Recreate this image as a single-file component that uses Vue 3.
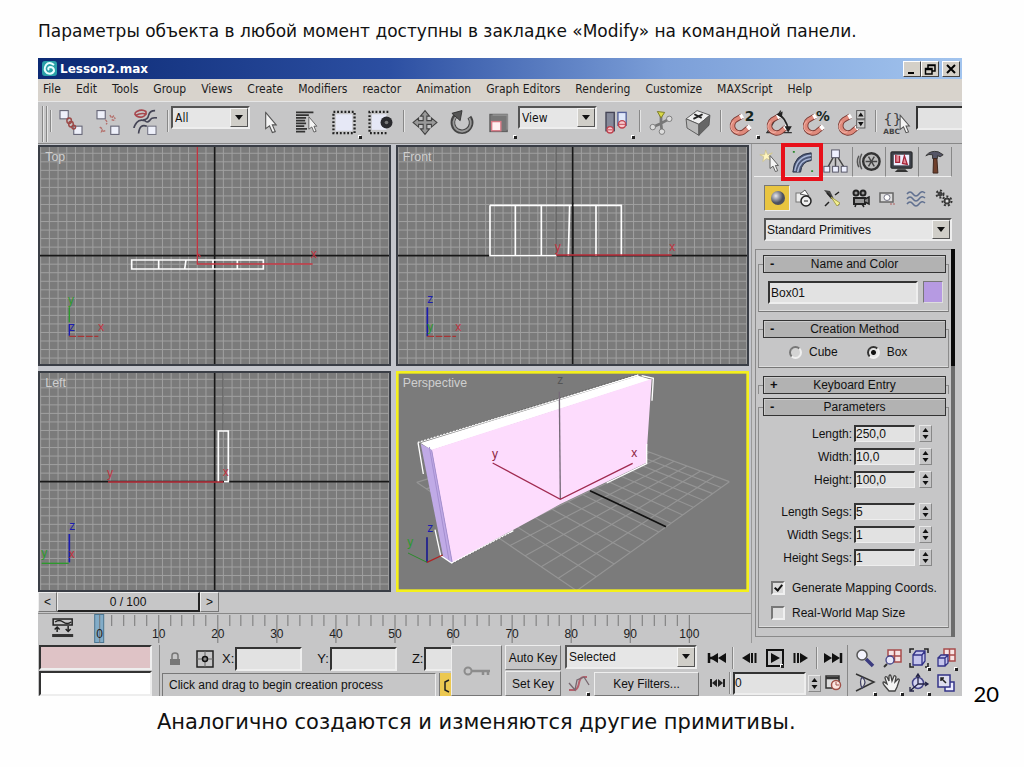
<script setup>
import { ref } from 'vue'

const menus = ['File', 'Edit', 'Tools', 'Group', 'Views', 'Create', 'Modifiers', 'reactor', 'Animation', 'Graph Editors', 'Rendering', 'Customize', 'MAXScript', 'Help']

const name = ref('Box01')
const method = ref('box')
const mapping = ref(true)
const realWorld = ref(false)
const frame = ref('0')
const sizes = ref([
  { id: 'length', label: 'Length:', value: '250,0' },
  { id: 'width', label: 'Width:', value: '10,0' },
  { id: 'height', label: 'Height:', value: '100,0' },
])
const segments = ref([
  { id: 'lsegs', label: 'Length Segs:', value: '5' },
  { id: 'wsegs', label: 'Width Segs:', value: '1' },
  { id: 'hsegs', label: 'Height Segs:', value: '1' },
])
const groups = [sizes, segments]

// orthographic grids, drawn outwards from the origin axes
const gridPath = (cx, cy) => {
  let d = ''
  for (let i = -21; i <= 21; i++) d += `M${(cx + i * 26.1).toFixed(1)} 0V700`
  for (let i = -14; i <= 14; i++) d += `M0 ${(cy + i * 25.6).toFixed(1)}H1100`
  return d
}

// perspective floor: unit square projected onto a quadrilateral
const floorPath = (() => {
  const [p0, p1, p2, p3] = [[560, 675], [1018, 348], [590, 190], [80, 350]]
  const dx1 = p1[0] - p2[0], dx2 = p3[0] - p2[0], dx3 = p0[0] - p1[0] + p2[0] - p3[0]
  const dy1 = p1[1] - p2[1], dy2 = p3[1] - p2[1], dy3 = p0[1] - p1[1] + p2[1] - p3[1]
  const det = dx1 * dy2 - dx2 * dy1
  const g = (dx3 * dy2 - dx2 * dy3) / det
  const h = (dx1 * dy3 - dx3 * dy1) / det
  const a = p1[0] - p0[0] + g * p1[0], b = p3[0] - p0[0] + h * p3[0]
  const d = p1[1] - p0[1] + g * p1[1], e = p3[1] - p0[1] + h * p3[1]
  const at = (u, v) => {
    const w = g * u + h * v + 1
    return `${((a * u + b * v + p0[0]) / w).toFixed(1)} ${((d * u + e * v + p0[1]) / w).toFixed(1)}`
  }
  let out = ''
  for (let i = 0; i <= 12; i++) {
    const t = i / 12
    out += `M${at(t, 0)}L${at(t, 1)}M${at(0, t)}L${at(1, t)}`
  }
  return out
})()

const ticks = Array.from({ length: 51 }, (_, i) => ({ frame: i * 2, x: Math.round(61 + i * 11.78) + 0.5 }))
</script>

<template>
  <div class="slide">
    <p class="lead">Параметры объекта в любой момент доступны в закладке «Modify» на командной панели.</p>

    <svg class="defs" width="0" height="0" aria-hidden="true">
      <symbol id="magnet" viewBox="0 0 36 36">
        <g fill="none" stroke-linecap="butt">
          <path d="M18 11 L11 15 A7 7 0 0 0 20 28 L26 23" stroke="#7a3a34" stroke-width="6" />
          <path d="M18 11 L11 15 A7 7 0 0 0 20 28 L26 23" stroke="#e08a7c" stroke-width="4" />
          <path d="M19 10.500 L16 12.200 M27 22.200 L24 24.700" stroke="#fff" stroke-width="5" />
          <path d="M9 17 A6 6 0 0 0 15 28" stroke="#f4b8ac" stroke-width="1" />
        </g>
      </symbol>
      <symbol id="pointer" viewBox="0 0 14 24">
        <path d="M2 1 V18 L6 15 L9 22 L12 21 L9 14 H13 Z" fill="#f4f4f4" stroke="#555" stroke-width="1.2" />
      </symbol>
    </svg>

    <main class="window">
      <header class="title">
        <svg width="17" height="17" viewBox="0 0 17 17" aria-hidden="true">
          <rect x="1" y="1" width="15" height="15" rx="3" fill="#2aa0a8" />
          <path d="M13 5 Q8 1 5 5 Q2 10 6 13 Q11 15 13 11 Q13 7 9 7 Q6 8 8 10" fill="none" stroke="#e8ffff" stroke-width="2" />
        </svg>
        <h1>Lesson2.max</h1>
        <div class="caption-buttons">
          <button aria-label="Minimize"><svg width="12" height="12"><path d="M2 10H8" stroke="#000" stroke-width="2" /></svg></button>
          <button aria-label="Restore"><svg width="12" height="12"><path d="M4 5V2H11V8H8M4 2.5H11M1.5 5.500H8V11H1.500Z M1 6.500H8" fill="none" stroke="#000" stroke-width="1.500" /></svg></button>
          <button class="close" aria-label="Close"><svg width="12" height="12"><path d="M2 2L10 10M10 2L2 10" stroke="#000" stroke-width="2" /></svg></button>
        </div>
      </header>

      <nav class="menu">
        <a v-for="m in menus" :key="m" href="#">{{ m }}</a>
      </nav>

      <div class="toolbar">
        <i class="sep grip"></i><i class="sep grip"></i><i class="sep"></i>
        <button class="tool" aria-label="Select and link">
          <svg viewBox="0 0 36 36"><g fill="#eef0fa" stroke="#667" stroke-width="1.200"><rect x="6" y="5" width="9" height="9" /><rect x="21" y="22" width="9" height="9" /></g><g fill="none" stroke="#9c4a48" stroke-width="1.600"><ellipse cx="16" cy="16" rx="2.500" ry="3" /><ellipse cx="18" cy="20" rx="2.500" ry="3" /><ellipse cx="21" cy="23" rx="2" ry="2" /></g></svg>
        </button>
        <button class="tool" aria-label="Unlink selection">
          <svg viewBox="0 0 36 36"><g fill="#eef0fa" stroke="#667" stroke-width="1.200"><rect x="6" y="5" width="9" height="9" /><rect x="21" y="22" width="9" height="9" /></g><path d="M15 15Q18 17 16 20M20 10l2 3 2-2 2 3M9 23l3 2-1 3 4-1M22 15l4 1" fill="none" stroke="#b4706c" stroke-width="1.500" stroke-dasharray="3 1" /></svg>
        </button>
        <button class="tool" aria-label="Bind to space warp">
          <svg viewBox="0 0 36 36"><path d="M9 6Q15 3 19 6Q20 10 15 12Q9 13 7 9Q7 7 9 6M8 10Q14 7 20 9" fill="none" stroke="#a8484e" stroke-width="1.800" /><path d="M29 5Q23 5 22 10T16 15M31 13Q25 12 23 16Q20 19 18 16Q12 14 9 18T6 24M20 22Q12 19 11 30" fill="none" stroke="#445" stroke-width="1.800" /><rect x="21" y="22" width="9" height="9" fill="#eef0fa" stroke="#667" /></svg>
        </button>
        <i class="sep wide"></i>
        <span class="drop filter"><select aria-label="Selection filter"><option>All</option></select></span>
        <button class="tool" aria-label="Select object"><svg viewBox="0 0 36 36"><use href="#pointer" x="11" y="6" width="15" height="25" /></svg></button>
        <button class="tool" aria-label="Select by name">
          <svg viewBox="0 0 36 36"><path d="M6 7H25M6 10H20M6 13H17M6 16H16M6 19H17M6 22H15M6 25H18M6 28H16" stroke="#333" stroke-width="1.800" /><use href="#pointer" x="18" y="11" width="12" height="19" /></svg>
        </button>
        <button class="tool flyout" aria-label="Rectangular selection">
          <svg viewBox="0 0 36 36"><rect x="9" y="9" width="18" height="18" fill="#e6e8f6" /><rect x="6.500" y="6.500" width="23" height="23" fill="none" stroke="#222" stroke-width="2.500" stroke-dasharray="2 2" /></svg>
        </button>
        <button class="tool" aria-label="Window crossing">
          <svg viewBox="0 0 36 36"><rect x="8" y="9" width="16" height="17" fill="#e6e8f6" /><path d="M26 6.500H5.500V29.500H26" fill="none" stroke="#222" stroke-width="2.500" stroke-dasharray="2 2" /><circle cx="24" cy="18" r="6.500" fill="#2a2a2e" /><circle cx="24" cy="18" r="2" fill="#777" /></svg>
        </button>
        <i class="sep wide"></i>
        <button class="tool" aria-label="Move">
          <svg viewBox="0 0 36 36"><path d="M18 5L23 11H20V16H25V13L31 18L25 23V20H20V25H23L18 31L13 25H16V20H11V23L5 18L11 13V16H16V11H13Z" fill="#999" stroke="#444" stroke-width="1.200" /></svg>
        </button>
        <button class="tool" aria-label="Rotate">
          <svg viewBox="0 0 36 36"><path d="M12 10A10 10 0 1 0 26 12" fill="none" stroke="#444" stroke-width="5" /><path d="M12 11A9.500 9.500 0 1 0 26 13" fill="none" stroke="#999" stroke-width="2" /><path d="M7 8L18 5L16 16Z" fill="#555" stroke="#333" /></svg>
        </button>
        <button class="tool flyout" aria-label="Scale">
          <svg viewBox="0 0 36 36"><rect x="8" y="9" width="19" height="19" fill="#777" stroke="#555" /><path d="M11 10H27V26" fill="none" stroke="#8d8d8d" stroke-width="2" /><rect x="10" y="17" width="10" height="10" fill="#fff0f2" stroke="#d87a86" stroke-width="1.500" /></svg>
        </button>
        <span class="drop filter"><select aria-label="Reference coordinate system"><option>View</option></select></span>
        <button class="tool flyout" aria-label="Use pivot point center">
          <svg viewBox="0 0 36 36"><rect x="6" y="7" width="9" height="20" fill="#868a9a" stroke="#445" stroke-width="1.500" /><rect x="19" y="7" width="9" height="14" fill="#e0e8fa" stroke="#56629a" stroke-width="1.500" /><g fill="#f6c8cc" stroke="#c04450" stroke-width="1.500"><circle cx="10.500" cy="26" r="3.500" /><circle cx="23.500" cy="20" r="4" /></g><path d="M8 26h5M20 20h7" stroke="#c04450" /></svg>
        </button>
        <i class="sep wide"></i>
        <button class="tool" aria-label="Select and manipulate">
          <svg viewBox="0 0 36 36"><path d="M18 19V9M18 19L27 14M18 19L9 23M18 19L19 28" stroke="#777" stroke-width="3" /><path d="M14 6L22 7L18 13Z" fill="#d8d848" stroke="#777722" /><g fill="#ddd" stroke="#777"><circle cx="27" cy="14" r="3" /><circle cx="9" cy="23" r="3" /><circle cx="19" cy="28" r="3" /></g></svg>
        </button>
        <button class="tool" aria-label="Keyboard shortcut override">
          <svg viewBox="0 0 36 36"><path d="M5 14L17 5L31 10L19 20Z" fill="#eee" stroke="#555" /><path d="M5 14L19 20V32L6 24Z" fill="#bbb" stroke="#555" /><path d="M19 20L31 10L30 21L19 32Z" fill="#666" stroke="#555" /><path d="M13 14L23 9M14 9L22 13" stroke="#222" stroke-width="2" /></svg>
        </button>
        <i class="sep wide"></i>
        <button class="tool flyout" aria-label="Snaps toggle"><svg viewBox="0 0 36 36"><use href="#magnet" x="0" y="0" width="36" height="36" /><text x="21" y="16" class="glyph big">2</text></svg></button>
        <button class="tool" aria-label="Angle snap">
          <svg viewBox="0 0 36 36"><path d="M5 29L20 5M4 29H32" stroke="#333" stroke-width="1.500" /><use href="#magnet" x="0" y="0" width="36" height="36" /><path d="M17 9Q26 13 28 26" fill="none" stroke="#222" stroke-width="1.800" /><path d="M15 9l7-3-1 7ZM24 22l4 7 4-7Z" fill="#222" /></svg>
        </button>
        <button class="tool" aria-label="Percent snap"><svg viewBox="0 0 36 36"><use href="#magnet" x="-1" y="0" width="36" height="36" /><text x="18" y="16" class="glyph big">%</text></svg></button>
        <button class="tool" aria-label="Spinner snap">
          <svg viewBox="0 0 36 36"><use href="#magnet" x="-3" y="0" width="36" height="36" /><rect x="22" y="5" width="9" height="9" fill="#ccc" stroke="#555" /><rect x="22" y="15" width="9" height="9" fill="#ccc" stroke="#555" /><path d="M23.500 11.500L26.500 7L29.500 11.500ZM23.500 17.500L26.500 22L29.500 17.500Z" fill="#111" /></svg>
        </button>
        <i class="sep wide"></i>
        <button class="tool" aria-label="Named selection sets">
          <svg viewBox="0 0 36 36"><text x="3" y="20" class="glyph brace">{}</text><text x="3" y="31" class="glyph abc">ABC</text><use href="#pointer" x="19" y="9" width="14" height="22" /></svg>
        </button>
        <input class="sunken set-name" type="text" aria-label="Selection set name" />
      </div>

      <div class="body">
        <section class="work">
          <div class="views">
            <svg viewBox="24 13 1059 663" role="img" aria-label="Top viewport">
              <rect x="24" y="13" width="1059" height="663" fill="#7b7b7b" />
              <path :d="gridPath(554, 345)" class="grid" />
              <path d="M554 13V676M24 345H1083" class="axis" />
              <text x="46" y="61" class="vlabel">Top</text>
              <path d="M305 358H700V385H305ZM386 358V385M468 358L464 385M549 358V385M622 358V385" class="wire" />
              <path d="M502 18V370H848M504 340l8 8" class="gizmo" />
              <text x="842" y="352" class="tag red">x</text>
              <path d="M118 500V545" class="green" /><path d="M118 550V585" stroke="#1c1cb0" stroke-width="4" /><path d="M118 587H205" class="red dash" />
              <text x="114" y="490" class="tag green">y</text><text x="117" y="572" class="tag blue">z</text><text x="204" y="572" class="tag red">x</text>
              <rect x="27" y="16" width="1053" height="657" class="frame" />
            </svg>
            <svg viewBox="18 13 1059 663" role="img" aria-label="Front viewport">
              <rect x="18" y="13" width="1059" height="663" fill="#7b7b7b" />
              <path :d="gridPath(548, 345)" class="grid" />
              <path d="M548 13V676M18 345H1077" class="axis" />
              <path d="M498 16V345" stroke="#555" stroke-width="3" />
              <text x="38" y="61" class="vlabel">Front</text>
              <path d="M300 194H694V344M300 194V345H500M376 194V345M454 194V345M539 194L535 345M618 194V345" class="wire" />
              <path d="M548 186V345" class="axis" />
              <path d="M498 343H845" class="gizmo" />
              <text x="494" y="332" class="tag red">y</text><text x="838" y="332" class="tag red">x</text>
              <path d="M112 500V587" class="bluel" /><path d="M112 587H198" class="red dash" />
              <text x="112" y="488" class="tag blue">z</text><text x="112" y="572" class="tag green">y</text><text x="196" y="572" class="tag red">x</text>
              <rect x="21" y="16" width="1053" height="657" class="frame" />
            </svg>
            <svg viewBox="24 16 1059 663" role="img" aria-label="Left viewport">
              <rect x="24" y="16" width="1059" height="663" fill="#7b7b7b" />
              <path :d="gridPath(554, 348)" class="grid" />
              <path d="M554 16V679M24 348H1083" class="axis" />
              <path d="M579 20V195" stroke="#555" stroke-width="3" />
              <text x="46" y="63" class="vlabel">Left</text>
              <path d="M565 348V196H595V348H582" class="wire" />
              <path d="M234 349H580" class="gizmo" />
              <text x="231" y="335" class="tag red">y</text><text x="578" y="332" class="tag red">x</text>
              <path d="M118 505V590" class="bluel" /><path d="M35 593H116" class="green" />
              <text x="118" y="492" class="tag blue">z</text><text x="34" y="574" class="tag green">y</text><text x="116" y="576" class="tag red">x</text>
              <rect x="27" y="19" width="1053" height="657" class="frame" />
            </svg>
            <svg viewBox="18 16 1059 663" role="img" aria-label="Perspective viewport">
              <rect x="18" y="16" width="1059" height="663" fill="#7b7b7b" />
              <path :d="floorPath" fill="none" stroke="#949494" stroke-width="3.500" />
              <path d="M600 375L828 483" stroke="#111" stroke-width="5" />
              <text x="38" y="63" class="vlabel">Perspective</text>
              <path d="M92 232L745 30L785 42L125 254Z" fill="#fff" />
              <path d="M92 234L125 252L187 592L160 575Z" fill="#c0aae6" />
              <path d="M125 252L785 40L768 292L510 416L187 592Z" fill="#fddcfd" />
              <path d="M118 244L178 590M125 254L187 592" stroke="#a58fd0" stroke-width="3" fill="none" />
              <path d="M84 230L745 28M84 230L100 325M135 492L152 570L185 592L370 495M755 30L790 38L786 105M770 235V294L650 352" fill="none" stroke="#fff" stroke-width="4" />
              <path d="M88 228L740 26M190 592L360 502" fill="none" stroke="#444" stroke-width="2" stroke-dasharray="5 5" />
              <path d="M508 78L511 400" stroke="#766a78" stroke-width="4" />
              <path d="M308 292L511 401L728 293" fill="none" stroke="#a02a50" stroke-width="4" />
              <text x="502" y="56" class="tag dim">z</text><text x="306" y="276" class="tag wine">y</text><text x="724" y="275" class="tag wine">x</text>
              <path d="M111 515V590" stroke="#1c1c90" stroke-width="5" /><path d="M111 590L54 562" stroke="#2c8a2c" stroke-width="3" /><path d="M111 590L158 568" stroke="#b02424" stroke-width="4" />
              <text x="112" y="500" class="tag blue">z</text><text x="52" y="541" class="tag green">y</text>
              <rect x="22" y="20" width="1051" height="655" fill="none" stroke="#f4f01c" stroke-width="8" />
            </svg>
          </div>

          <div class="slider">
            <button aria-label="Previous frame">&lt;</button>
            <button class="thumb">0 / 100</button>
            <button aria-label="Next frame">&gt;</button>
          </div>
          <svg class="ruler" viewBox="0 0 712 30" role="img" aria-label="Track bar">
            <path d="M0 .5H712" stroke="#888" />
            <rect x="56.500" y="1.500" width="9" height="28" fill="#82acc8" stroke="#4b7590" />
            <g v-for="t in ticks" :key="t.frame">
              <path :d="`M${t.x} 2V${t.frame % 10 ? 13 : 30}`" stroke="#777" />
              <text v-if="t.frame % 10 === 0" :x="t.x" y="25" text-anchor="middle">{{ t.frame }}</text>
            </g>
            <g fill="none" stroke="#222" stroke-width="1.500"><rect x="15" y="6" width="19" height="6" /><path d="M17 9q4-3 8 0t8 0M19 19V14M16.500 16.500L19 14L21.500 16.500M30 13V18M27.500 16L30 18.500L32.500 16" /></g>
            <rect x="14" y="21" width="21" height="3" fill="#333" />
          </svg>
        </section>

        <aside class="panel">
          <div class="tabs">
            <button aria-label="Create"><svg viewBox="-4 0 32 28"><path d="M8 2L10 7L15 5L11 9L14 13L9 11L5 14L6 9L2 7L7 7Z" fill="#fff6c0" stroke="#ccc28a" stroke-width=".8" /><use href="#pointer" x="10" y="7" width="13" height="19" /></svg></button>
            <button class="active" aria-label="Modify"><svg viewBox="0 0 32 28"><path d="M6 25Q7 6 25 5V13Q15 14 14 25Z" fill="#4c5878" stroke="#2c3448" /><path d="M8 24Q10 9 25 7.500M11 25Q13 12 25 11" fill="none" stroke="#aab8d8" stroke-width="1.500" /><path d="M6 3h2v2H6zM25 23h2v2h-2z" fill="#2c8a2c" /></svg></button>
            <button aria-label="Hierarchy"><svg viewBox="0 0 32 28"><path d="M16 9V20M14 9L8 20M18 9L25 20" stroke="#444" stroke-width="1.500" /><g fill="#eef0ff" stroke="#556"><rect x="12" y="2" width="8" height="8" /><rect x="4" y="19" width="6" height="6" /><rect x="13" y="19" width="6" height="6" /><rect x="22" y="19" width="6" height="6" /></g></svg></button>
            <button aria-label="Motion"><svg viewBox="0 0 32 28"><circle cx="19" cy="14" r="8.500" fill="#bbb" stroke="#333" stroke-width="2.500" /><path d="M13 14H25M16 9L22 19M22 9L16 19" stroke="#444" stroke-width="1.500" /><path d="M9 6Q5 14 9 22M6 8Q3 14 6 20" fill="none" stroke="#555" stroke-width="1.500" /></svg></button>
            <button aria-label="Display"><svg viewBox="0 0 32 28"><rect x="5" y="4" width="22" height="17" rx="1" fill="#3c4048" stroke="#222" /><rect x="8" y="7" width="16" height="11" fill="#eef" /><path d="M10 7V15H14V8M17 16L19 8L22 17Z" fill="#e28a96" stroke="#a42438" stroke-width="1.300" /><path d="M12 22H20L23 25H9Z" fill="#333" /></svg></button>
            <button aria-label="Utilities"><svg viewBox="0 0 32 28"><path d="M7 8Q12 2 20 4L25 7L22 9L19 8V11H14V7Q10 6 7 8Z" fill="#556" stroke="#333" /><path d="M15 11H18.500L19.500 26H14.500Z" fill="#70402c" stroke="#3c241c" /></svg></button>
          </div>
          <div class="kinds">
            <button class="on" aria-label="Geometry"><svg viewBox="0 0 24 24"><defs><radialGradient id="ball" cx=".35" cy=".35"><stop offset="0" stop-color="#e8e8ee" /><stop offset="1" stop-color="#4c5060" /></radialGradient></defs><circle cx="13" cy="12" r="7" fill="url(#ball)" /></svg></button>
            <button aria-label="Shapes"><svg viewBox="0 0 24 24"><rect x="4" y="7" width="10" height="9" fill="#eee" stroke="#777" /><path d="M8 8L13 4L17 10Z" fill="#fff" stroke="#555" /><circle cx="14" cy="15" r="5" fill="#eee" stroke="#222" stroke-width="1.500" /><path d="M12 15h4" stroke="#222" /></svg></button>
            <button aria-label="Lights"><svg viewBox="0 0 24 24"><path d="M4 4L10 5L14 13L11 13Z" fill="#444" /><path d="M7 7L19 19M15 9L19 6M9 16L5 20" stroke="#222" stroke-width="1.500" /><path d="M11 11L20 17L17 20Z" fill="#f4f090" stroke="#aaa450" /></svg></button>
            <button aria-label="Cameras"><svg viewBox="0 0 24 24"><g fill="#999" stroke="#222" stroke-width="2"><circle cx="8" cy="7" r="2.500" /><circle cx="15" cy="7" r="2.500" /><rect x="6" y="12" width="11" height="6" /></g><path d="M17 13L21 11V18L17 16M8 18L7 21M14 18L16 21" stroke="#222" stroke-width="1.500" fill="#888" /></svg></button>
            <button aria-label="Helpers"><svg viewBox="0 0 24 24"><rect x="4" y="7" width="13" height="9" fill="#ddd" stroke="#666" stroke-width="1.500" /><circle cx="11" cy="11.500" r="3" fill="#fff" stroke="#778" /><path d="M14 18h6" stroke="#b06060" stroke-dasharray="2 1" /></svg></button>
            <button aria-label="Space warps"><svg viewBox="0 0 24 24"><path d="M3 8q3-4 6 0t6 0 6-1M3 13q3-4 6 0t6 0 6-1M3 18q3-4 6 0t6 0 6-1" fill="none" stroke="#607090" stroke-width="1.500" /></svg></button>
            <button aria-label="Systems"><svg viewBox="0 0 24 24"><g fill="#444" stroke="#333"><circle cx="8" cy="8" r="2" /><circle cx="15" cy="15" r="3" /></g><g fill="none" stroke="#333" stroke-width="2" stroke-dasharray="2 2"><circle cx="8" cy="8" r="3.500" /><circle cx="15" cy="15" r="4.500" /></g><circle cx="15" cy="15" r="1.500" fill="#ddd" /></svg></button>
          </div>
          <span class="drop category"><select aria-label="Object category"><option>Standard Primitives</option></select></span>

          <div class="scroller">
            <div class="rollouts">
              <section class="rollout">
                <button class="head"><b>-</b>Name and Color</button>
                <div class="group name-row">
                  <input v-model="name" class="sunken" type="text" aria-label="Object name" />
                  <button class="swatch" aria-label="Object color"></button>
                </div>
              </section>
              <section class="rollout">
                <button class="head"><b>-</b>Creation Method</button>
                <div class="group radios">
                  <label><input v-model="method" type="radio" name="method" value="cube" />Cube</label>
                  <label><input v-model="method" type="radio" name="method" value="box" />Box</label>
                </div>
              </section>
              <section class="rollout shut">
                <button class="head"><b>+</b>Keyboard Entry</button>
                <div class="group"></div>
              </section>
              <section class="rollout">
                <button class="head"><b>-</b>Parameters</button>
                <div class="group params">
                  <div v-for="(g, gi) in groups" :key="gi" class="fields">
                    <div v-for="f in g.value" :key="f.id" class="field">
                      <label :for="f.id">{{ f.label }}</label>
                      <input :id="f.id" v-model="f.value" class="sunken" type="text" />
                      <button class="spin" :aria-label="'Adjust ' + f.label"><svg width="11" height="15"><path d="M2.500 6L5.500 2L8.500 6ZM2.500 9L5.500 13L8.500 9Z" fill="#111" /></svg></button>
                    </div>
                  </div>
                  <label class="check"><input v-model="mapping" type="checkbox" />Generate Mapping Coords.</label>
                  <label class="check"><input v-model="realWorld" type="checkbox" />Real-World Map Size</label>
                </div>
              </section>
            </div>
            <div class="bar"></div>
          </div>
        </aside>
      </div>

      <footer class="status">
        <div class="listener">
          <input class="sunken pink" type="text" aria-label="Macro recorder" />
          <input class="sunken white" type="text" aria-label="Script listener" />
        </div>
        <div class="info">
          <div class="coords">
            <svg width="14" height="16" viewBox="0 0 14 16" aria-hidden="true"><path d="M4 8V4.500Q4 2 7 2T10 4.500V8" fill="none" stroke="#777" stroke-width="1.500" /><rect x="2" y="8" width="10" height="6" fill="#777" /></svg>
            <svg class="abs" width="18" height="18" viewBox="0 0 18 18" aria-hidden="true"><rect x="1" y="1" width="16" height="16" fill="none" stroke="#222" stroke-width="1.500" /><path d="M9 1V17M1 9H17" stroke="#666" /><circle cx="9" cy="9" r="2.500" fill="#888" stroke="#111" stroke-width="1.500" /></svg>
            <label for="cx">X:</label><input id="cx" class="sunken" type="text" />
            <label for="cy">Y:</label><input id="cy" class="sunken" type="text" />
            <label for="cz">Z:</label><input id="cz" class="sunken last" type="text" />
          </div>
          <div class="prompt-row">
            <output class="prompt">Click and drag to begin creation process</output>
            <button class="degrade" aria-label="Adaptive degradation"><svg width="10" height="20"><path d="M9 5L5 7V15L9 17" fill="none" stroke="#222" stroke-width="1.500" /></svg></button>
          </div>
        </div>
        <button class="key" aria-label="Set keys"><svg width="30" height="16" viewBox="0 0 30 16"><circle cx="6" cy="8" r="3.500" fill="none" stroke="#8c8c8c" stroke-width="2" /><path d="M10 8H28M21 8V12M26 8V12" stroke="#8c8c8c" stroke-width="2.500" /></svg></button>
        <div class="pair">
          <button>Auto Key</button>
          <button>Set Key</button>
        </div>
        <div class="keyset">
          <span class="drop"><select aria-label="Key set"><option>Selected</option></select></span>
          <div class="keyrow">
            <button class="flat flyout" aria-label="Default tangents"><svg width="26" height="22" viewBox="0 0 26 22"><path d="M4 17H10Q13 16 14 10T19 4H22" fill="none" stroke="#b4606c" stroke-width="2" /><path d="M4 10L10 17L12 7L19 4M19 4L24 12" fill="none" stroke="#776870" stroke-width="1.300" /></svg></button>
            <button class="filters">Key Filters...</button>
          </div>
        </div>
        <div class="transport">
          <div class="play-row">
            <button class="flat" aria-label="Go to start"><svg width="20" height="20" viewBox="0 0 20 20"><path d="M2 5V15M3 10H6" stroke="#111" stroke-width="2.500" /><path d="M3 10L11 5V15ZM11 10L19 5V15Z" fill="#111" /></svg></button>
            <i class="sep"></i>
            <button class="flat" aria-label="Previous frame"><svg width="20" height="20" viewBox="0 0 20 20"><path d="M2 10L10 5V15Z" fill="#111" /><path d="M12 5V15M15.500 5V15" stroke="#111" stroke-width="2" /></svg></button>
            <button class="flat flyout" aria-label="Play"><svg width="20" height="20" viewBox="0 0 20 20"><rect x="2" y="2" width="16" height="16" fill="none" stroke="#111" stroke-width="2" /><path d="M6 5L15 10L6 15Z" fill="#111" /></svg></button>
            <button class="flat" aria-label="Next frame"><svg width="20" height="20" viewBox="0 0 20 20"><path d="M18 10L10 5V15Z" fill="#111" /><path d="M8 5V15M4.500 5V15" stroke="#111" stroke-width="2" /></svg></button>
            <i class="sep"></i>
            <button class="flat" aria-label="Go to end"><svg width="20" height="20" viewBox="0 0 20 20"><path d="M18 5V15" stroke="#111" stroke-width="2.500" /><path d="M1 5L9 10L1 15ZM9 5L17 10L9 15Z" fill="#111" /></svg></button>
          </div>
          <div class="play-row">
            <button class="flat" aria-label="Key mode"><svg width="20" height="20" viewBox="0 0 20 20"><path d="M4 6V14M17 6V14" stroke="#222" stroke-width="2" /><path d="M5 10L10 6V14ZM16 10L11 6V14Z" fill="#222" /></svg></button>
            <i class="sep"></i>
            <input v-model="frame" class="sunken frame-no" type="text" aria-label="Current frame" />
            <button class="spin" aria-label="Adjust frame"><svg width="11" height="15"><path d="M2.500 6L5.500 2L8.500 6ZM2.500 9L5.500 13L8.500 9Z" fill="#111" /></svg></button>
            <button class="flat" aria-label="Time configuration"><svg width="20" height="20" viewBox="0 0 20 20"><rect x="3" y="3" width="13" height="12" fill="#ddd" stroke="#333" stroke-width="1.500" /><path d="M3 5H16" stroke="#333" stroke-width="2.500" /><circle cx="13" cy="12" r="4.500" fill="#fbe4e0" stroke="#a05048" stroke-width="1.500" /><path d="M13 9V12H16" fill="none" stroke="#a05048" /></svg></button>
          </div>
        </div>
        <div class="nav">
          <button class="flat" aria-label="Zoom"><svg viewBox="0 0 22 22"><path d="M12 12L19 19" stroke="#3c3c80" stroke-width="3.500" /><circle cx="8" cy="8" r="5" fill="#f4f4ff" stroke="#555" stroke-width="1.500" /></svg></button>
          <button class="flat" aria-label="Zoom all"><svg viewBox="0 0 22 22"><path d="M7 3H20V15H7ZM13.500 3V15M7 9H20" fill="#f8e4e4" stroke="#a84c4c" stroke-width="1.500" /><path d="M6 17L3 20" stroke="#333" stroke-width="2" /><circle cx="9" cy="13" r="4" fill="#e8e8f8" stroke="#448" stroke-width="1.300" /></svg></button>
          <button class="flat flyout" aria-label="Zoom extents"><svg viewBox="0 0 22 22"><path d="M2 6V2H6M16 2H20V6M2 16V20H6M20 16V20H17" fill="none" stroke="#222" stroke-width="1.500" /><path d="M5 8H14V18H5ZM5 8L8 4H17V14L14 18M14 8L17 4" fill="#c4c4ec" stroke="#338" stroke-width="1.300" /></svg></button>
          <button class="flat flyout" aria-label="Zoom extents all"><svg viewBox="0 0 22 22"><path d="M9 2H20V14H9ZM14.500 2V14M9 8H20" fill="#f8e4e4" stroke="#a84c4c" stroke-width="1.500" /><path d="M3 11H10V19H3ZM3 11L6 8H13V16L10 19M10 11L13 8" fill="#c4c4ec" stroke="#338" stroke-width="1.300" /></svg></button>
          <button class="flat flyout" aria-label="Field of view"><svg viewBox="0 0 22 22"><path d="M2 2L20 10L2 19" fill="none" stroke="#333" stroke-width="1.500" /><path d="M8 5Q14 10 8 16Q5 10 8 5" fill="#ddd" stroke="#446" stroke-width="1.300" /></svg></button>
          <button class="flat flyout" aria-label="Pan"><svg viewBox="0 0 22 22"><path d="M8 19L3 13Q1 10 3 10L6 12L4 6Q4 4 6 5L8 9L8 4Q9 2 10 4L11 9L13 4Q14 3 15 5L14 10L17 7Q19 7 18 9L16 15L14 19Z" fill="#f4f4f4" stroke="#444" stroke-width="1.300" /></svg></button>
          <button class="flat flyout" aria-label="Arc rotate"><svg viewBox="0 0 22 22"><circle cx="10" cy="11" r="5.500" fill="#d4d4f0" stroke="#448" stroke-width="1.500" /><path d="M10 3V12L3 18M10 12H19M8 5L10 2L12 5M17 10L20 12L17 14M2 15V19H6" fill="none" stroke="#224" stroke-width="1.300" /></svg></button>
          <button class="flat" aria-label="Maximize viewport"><svg viewBox="0 0 22 22"><rect x="10" y="10" width="9" height="9" fill="#eef" stroke="#338" stroke-width="1.500" /><rect x="3" y="3" width="12" height="12" fill="#dde" stroke="#338" stroke-width="1.500" /><path d="M6 9V6H9M6 6L11 11" fill="none" stroke="#222" stroke-width="1.500" /></svg></button>
        </div>
      </footer>
    </main>

    <p class="note">Аналогично создаются и изменяются другие примитивы.</p>
    <span class="page">20</span>
  </div>
</template>

<style>
body { margin: 0; background: #fefefe; }
</style>

<style scoped>
.slide { position: relative; padding: 18px 62px 0 38px; font-family: "Liberation Sans", Arial, sans-serif; font-size: 12px; color: #111; }
.slide * { box-sizing: border-box; }
.defs { position: absolute; }
.lead, .note { margin: 0; font-family: "DejaVu Sans", Verdana, sans-serif; color: #111; white-space: nowrap; }
.lead { font-size: 17px; line-height: 26px; height: 40px; }
.note { font-size: 21px; line-height: 30px; padding: 11px 0 0 119px; }
.page { position: absolute; right: 25px; top: 680px; font: 22px/28px Lato, Carlito, sans-serif; color: #000; }
button, input, select { font: inherit; color: inherit; margin: 0; padding: 0; border-radius: 0; }
button { background: none; border: 0; }
svg { display: block; }

.window { background: #c6c6c7; }
.title { display: flex; align-items: center; height: 21px; padding: 0 2px 0 3px; background: linear-gradient(90deg, #0c2a74, #2c4fa2 38%, #7c9fd8 68%, #a2c4ee); }
.title h1 { margin: 0 0 0 2px; font: bold 12px/20px "DejaVu Sans", Verdana, sans-serif; color: #fff; }
.caption-buttons { display: flex; margin-left: auto; }
.caption-buttons button { width: 18px; height: 16px; display: grid; place-items: center; background: #d4d0c8; border: 1px solid; border-color: #fff #444 #444 #fff; }
.caption-buttons .close { margin-left: 3px; }

.menu { display: flex; gap: 15px; height: 22px; padding-left: 5px; background: #d8d3cc; }
.menu a { font: 12px/21px "DejaVu Sans Condensed", "DejaVu Sans", Tahoma, sans-serif; font-stretch: condensed; color: #1c1c1c; text-decoration: none; white-space: nowrap; }

.toolbar { display: flex; align-items: flex-start; height: 43px; padding: 4px 0 2px 3px; border-top: 1px solid #e6e6e6; border-bottom: 1px solid #888; }
.sep { flex: none; width: 2px; height: 22px; margin: 4px 1px 0; border-left: 1px solid #888; border-right: 1px solid #e4e4e4; }
.sep.grip { height: 36px; margin-top: 0; }
.sep.wide { margin: 4px 2px 0 3px; }
.tool { position: relative; flex: none; width: 37px; height: 33px; }
.tool svg { width: 36px; height: 33px; }
.flyout { position: relative; }
.flyout::after { content: ""; position: absolute; right: 1px; bottom: 0; width: 3px; height: 3px; background: #222; box-shadow: -1px -1px 0 #fff; }
.glyph { font-family: "DejaVu Sans", sans-serif; font-weight: bold; fill: #16261e; }
.glyph.big { font-size: 15px; }
.glyph.brace { font-size: 16px; font-weight: normal; fill: #444; }
.glyph.abc { font-size: 8px; fill: #444; }

.drop { position: relative; display: block; flex: none; height: 23px; border: 2px solid; border-color: #555 #eee #eee #555; background: #e6e6e6; }
.drop select { width: 100%; height: 100%; padding: 0 22px 0 2px; border: 0; appearance: none; background: transparent; }
.drop::before { content: ""; position: absolute; right: 0; top: 0; bottom: 0; width: 16px; background: #d0cec8; border: 1px solid; border-color: #f4f4f4 #555 #555 #f4f4f4; pointer-events: none; }
.drop::after { content: ""; position: absolute; right: 5px; top: 7px; border: 4px solid transparent; border-top: 5px solid #111; border-bottom: 0; pointer-events: none; }
.filter { width: 79px; margin-right: 2px; font-family: "DejaVu Sans Condensed", "DejaVu Sans", sans-serif; font-stretch: condensed; }
.sunken { border: 2px solid; border-color: #333 #eee #eee #333; background: #e2e2e2; min-width: 0; }
.set-name { flex: 1; height: 24px; border-right: 0; }

.body { display: flex; }
.work { flex: 1; min-width: 0; }
.views { display: grid; grid-template-columns: 1fr 1fr; gap: 5px; padding: 1px 2px 0 0; background: #c4c6cc; }
.views svg { width: 100%; height: auto; }
.grid { stroke: #a0a0a0; stroke-width: 3; fill: none; }
.axis { stroke: #181818; stroke-width: 5; }
.wire { stroke: #fff; stroke-width: 5; fill: none; }
.gizmo { stroke: #c23440; stroke-width: 4; fill: none; }
.frame { fill: none; stroke: #3a3e46; stroke-width: 6; }
.vlabel { font-size: 37px; fill: #cfcfcf; }
.tag { font-size: 36px; }
path.green { stroke: #2c9a2c; stroke-width: 4; }
path.red { stroke: #a83434; stroke-width: 4; }
.bluel { stroke: #1c1cb0; stroke-width: 5; }
.dash { stroke-dasharray: 20 5; }
text.red { fill: #c23440; }
text.green { fill: #2c9a2c; }
text.blue { fill: #1c1cb0; }
text.wine { fill: #8c2440; }
text.dim { fill: #555; }

.slider { display: flex; height: 20px; margin-bottom: 1px; }
.slider button { width: 19px; border: 1px solid; border-color: #eee #777 #777 #eee; line-height: 16px; }
.slider .thumb { width: 143px; border-color: #eee #222 #222 #eee; border-width: 1px 2px 2px 1px; }
.ruler { width: 100%; height: auto; }
.ruler text { font-size: 12px; fill: #222; }

.panel { flex: none; width: 211px; padding-top: 3px; border-left: 1px solid #999; }
.tabs { display: flex; height: 30px; margin-left: 2px; }
.tabs button { position: relative; width: 33px; border-right: 1px solid #888; border-bottom: 1px solid #eee; }
.tabs button:first-child { border-right: 0; }
.tabs svg { width: 31px; height: 27px; }
.tabs .active::after { content: ""; position: absolute; left: -6px; top: -4px; width: 34px; height: 30px; border: 4px solid #e8101a; z-index: 1; }
.kinds { display: flex; gap: 2px; height: 26px; margin: 8px 0 7px 12px; }
.kinds button { width: 26px; height: 26px; }
.kinds svg { width: 24px; height: 24px; }
.kinds .on { background: #e8c440; border: 1px solid; border-color: #777 #eee #eee #777; }
.category { margin: 0 10px 0 12px; }
.category select { padding-left: 1px; }
.scroller { display: flex; margin: 8px 7px 5px 3px; }
.rollouts { flex: 1; min-width: 0; padding: 5px 2px 8px; border: 1px solid #8a8a8a; border-right: 0; }
.bar { width: 4px; margin-right: 0; background: linear-gradient(#0a0a0a 117px, #6c6c6c 117px); }
.rollout { margin-bottom: 8px; }
.rollout.shut { margin-bottom: 4px; }
.rollout:last-child { margin-bottom: 0; }
.head { position: relative; display: block; width: calc(100% - 8px); height: 18px; margin: 0 3px 0 5px; background: #b2b2b2; border: 1px solid #333; box-shadow: inset 1px 1px 0 #ccc; line-height: 15px; text-align: center; }
.head b { position: absolute; left: 6px; top: 0; font-size: 13px; }
.group { margin-top: -9px; border: 1px solid #8c8c8c; border-bottom-color: #777; box-shadow: inset 0 -1px 0 #ddd; }
.shut .group { height: 9px; border-bottom: 0; box-shadow: none; }
.name-row { display: flex; gap: 5px; padding: 16px 5px 7px 9px; }
.name-row input { flex: 1; height: 23px; padding-left: 1px; }
.swatch { width: 20px; height: 22px; background: #b69ae2; border: 1px solid; border-color: #777 #ddd #ddd #777; }
.radios { display: flex; gap: 29px; padding: 13px 0 6px 30px; }
.radios label { display: flex; align-items: center; gap: 7px; height: 18px; }
.radios input { width: 13px; height: 13px; appearance: none; border: 2px solid; border-color: #777 #f0f0f0 #f0f0f0 #777; border-radius: 50%; background: #d4d4d4; }
.radios input:checked { background: radial-gradient(#111 0 2px, #e4e4e4 3px); border-color: #333 #f0f0f0 #f0f0f0 #333; }
.params { padding: 17px 0 2px 12px; }
.fields { display: grid; gap: 6px; margin-bottom: 15px; }
.fields + .fields { margin-bottom: 9px; }
.field { display: flex; align-items: center; justify-content: flex-end; height: 17px; padding-right: 16px; }
.field input { width: 61px; height: 17px; margin: 0 4px 0 2px; line-height: 14px; border-width: 2px 1px 1px 2px; }
.spin { flex: none; width: 13px; height: 17px; border: 1px solid; border-color: #e8e8e8 #888 #888 #e8e8e8; }
.check { display: flex; align-items: center; gap: 7px; height: 25px; white-space: nowrap; }
.check input { flex: none; width: 14px; height: 14px; appearance: none; position: relative; background: #dcdcdc; border: 2px solid; border-color: #777 #f0f0f0 #f0f0f0 #777; }
.check input:checked::after { content: ""; position: absolute; left: 3px; top: 0; width: 3px; height: 6px; border: solid #111; border-width: 0 2px 2px 0; transform: rotate(40deg); }

.status { display: flex; height: 53px; padding-top: 2px; }
.listener { width: 113px; flex: none; margin: 0 7px 0 1px; display: grid; grid-template-rows: 25px 25px; gap: 1px; }
.listener input { width: 100%; }
.pink { background: #dfc3c6; }
.white { background: #fff; }
.info { flex: 1; min-width: 0; border-left: 1px solid #888; padding-left: 2px; display: flex; flex-direction: column; }
.coords { display: flex; align-items: center; height: 27px; padding-left: 6px; }
.coords svg { flex: none; }
.coords .abs { margin: 0 8px 0 14px; }
.coords label { flex: none; margin-right: 1px; font-size: 13px; }
.coords input { flex: none; width: 67px; height: 24px; margin-right: 15px; }
.coords .last { flex: 1; margin: 0; border-right: 0; }
.prompt-row { display: flex; flex: 1; gap: 3px; padding-top: 1px; }
.prompt { flex: 1; border: 1px solid #777; border-right-color: #eee; border-bottom: 0; padding-left: 6px; line-height: 22px; white-space: nowrap; overflow: hidden; }
.degrade { width: 12px; background: #ecc850; border-left: 1px solid #777; }
.key { flex: none; width: 51px; display: grid; place-items: center; border: 1px solid; border-color: #eee #777 #777 #eee; }
.pair { flex: none; width: 56px; margin: 0 4px 0 3px; display: grid; grid-template-rows: 1fr 1fr; gap: 1px; }
.pair button, .filters { border: 1px solid; border-color: #eee #777 #777 #eee; white-space: nowrap; }
.keyset { flex: none; width: 134px; display: flex; flex-direction: column; gap: 3px; }
.keyset .drop { width: 132px; height: 24px; }
.keyrow { display: flex; flex: 1; gap: 3px; }
.keyrow .filters { flex: 1; }
.transport { flex: none; width: 149px; padding-left: 8px; display: grid; grid-template-rows: 1fr 1fr; }
.play-row { display: flex; align-items: center; justify-content: space-between; padding-right: 4px; border-right: 1px solid #888; }
.play-row .sep { margin: 0; }
.frame-no { width: 73px; height: 23px; }
.flat { flex: none; }
.nav { flex: none; display: grid; grid-template-columns: repeat(4, 27px); grid-template-rows: 1fr 1fr; padding: 0 3px; }
.nav svg { width: 22px; height: 22px; margin: auto; }
</style>
